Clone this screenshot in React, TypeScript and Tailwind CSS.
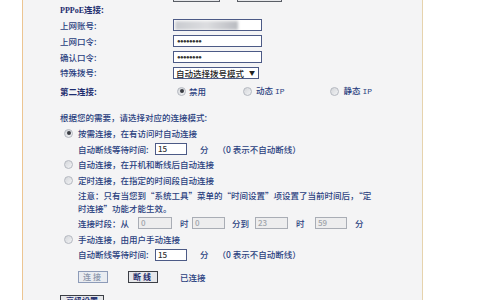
import React from "react";

// PPPoE WAN settings panel (router admin page, scrolled mid-form)

const font = "font-['Noto_Sans_CJK_SC','Noto_Sans',sans-serif]";

function Radio({ checked = false }: { checked?: boolean }) {
  return (
    <span className="w-[9px] h-[9px] rounded-full border border-[#b4b8c0] bg-gradient-to-br from-[#d4d6da] to-[#f2f3f5] flex items-center justify-center flex-shrink-0">
      {checked && <span className="w-[4px] h-[4px] rounded-full bg-[#3a3d44]" />}
    </span>
  );
}

function TextBox({ value, w, disabled = false }: { value: string; w: string; disabled?: boolean }) {
  return (
    <span
      className={
        disabled
          ? `${w} h-[12px] border border-[#a9adb5] bg-[#ededee] text-[#a0a4aa] text-[8px] leading-[10px] pl-[2px] flex-shrink-0`
          : `${w} h-[12px] border border-[#4c5a86] bg-white text-[#333] text-[8px] leading-[10px] pl-[2px] flex-shrink-0`
      }
    >
      {value}
    </span>
  );
}

function Password() {
  return (
    <span className="w-[89px] h-[12px] border border-[#4c5a86] bg-white text-[#333] pl-[3px] flex items-center flex-shrink-0">
      <span className="font-['Liberation_Sans',sans-serif] text-[6px] leading-none tracking-[-0.6px]">●●●●●●●●</span>
    </span>
  );
}

function Label({ children }: { children: React.ReactNode }) {
  return <span className="w-[113px] flex-shrink-0">{children}</span>;
}

export default function App() {
  return (
    <div className={`w-[480px] h-[300px] overflow-hidden bg-white ${font} text-[8.5px] font-medium text-[#2a3f80]`}>
      <div className="ml-[22px] w-[401px] h-[320px] bg-[#f4f4f5] border-l border-r border-l-[#ecc592] border-r-[#e6d3ad] pl-[37px] flex flex-col">
        {/* top buttons, mostly scrolled off */}
        <div className="h-[11px] -mt-[9px] flex pl-[113px] gap-[17px]">
          <span className="w-[47px] h-[11px] border border-[#5a5e66] bg-[#e6e7ea]" />
          <span className="w-[45px] h-[11px] border border-[#5a5e66] bg-[#e6e7ea]" />
        </div>

        <div className="h-[15px] flex items-center font-bold text-[#1d2c6e]">
          <span>
            <span className="font-['Liberation_Serif',serif] text-[8px]">PPPoE</span>连接:
          </span>
        </div>

        <div className="h-[16px] flex items-center">
          <Label>上网账号:</Label>
          <span className="w-[89px] h-[12px] border border-[#4c5a86] bg-white relative overflow-hidden flex-shrink-0">
            <span className="absolute left-[1px] top-[1px] w-[63px] h-[9px] blur-[1.5px] bg-gradient-to-r from-[#c9cbd0] via-[#dcdde0] to-[#b9bbc0]" />
          </span>
        </div>
        <div className="h-[16px] flex items-center">
          <Label>上网口令:</Label>
          <Password />
        </div>
        <div className="h-[16px] flex items-center">
          <Label>确认口令:</Label>
          <Password />
        </div>
        <div className="h-[15px] flex items-center">
          <Label>特殊拨号:</Label>
          <span className="w-[86px] h-[12px] border border-[#4c5a86] bg-white text-[#222] leading-[10px] pl-[2px] flex items-center justify-between pr-[3px] flex-shrink-0">
            自动选择拨号模式<span className="text-[6px]">▼</span>
          </span>
        </div>

        <div className="h-[16px] mt-[3px] flex items-center">
          <Label>
            <span className="font-bold text-[#1d2c6e]">第二连接:</span>
          </Label>
          <span className="ml-[4px] flex items-center gap-[3px]">
            <Radio checked />
            <span>禁用</span>
          </span>
          <span className="ml-[37px] flex items-center gap-[4px]">
            <Radio />
            <span>
              动态 <span className="font-['Liberation_Mono',monospace] text-[8px]">IP</span>
            </span>
          </span>
          <span className="ml-[45px] flex items-center gap-[5px]">
            <Radio />
            <span>
              静态 <span className="font-['Liberation_Mono',monospace] text-[8px]">IP</span>
            </span>
          </span>
        </div>

        <div className="h-[16px] mt-[10px] flex items-center">根据您的需要，请选择对应的连接模式:</div>

        <div className="h-[16px] flex items-center gap-[5px] pl-[4px]">
          <Radio checked />
          按需连接，在有访问时自动连接
        </div>
        <div className="h-[16px] flex items-center pl-[18px]">
          <span className="w-[77px]">自动断线等待时间:</span>
          <TextBox w="w-[32px]" value="15" />
          <span className="ml-[13px]">分</span>
          <span className="ml-[9px]">（0 表示不自动断线）</span>
        </div>
        <div className="h-[15px] flex items-center gap-[5px] pl-[4px]">
          <Radio />
          自动连接，在开机和断线后自动连接
        </div>
        <div className="h-[16px] flex items-center gap-[5px] pl-[4px]">
          <Radio />
          定时连接，在指定的时间段自动连接
        </div>
        <div className="pl-[18px] mt-[1px] leading-[13px]">
          <div>注意：只有当您到“系统工具”菜单的“时间设置”项设置了当前时间后，“定</div>
          <div>时连接”功能才能生效。</div>
        </div>
        <div className="h-[16px] flex items-center pl-[18px]">
          <span className="w-[60px]">连接时段：从</span>
          <TextBox w="w-[34px]" value="0" disabled />
          <span className="ml-[8px] w-[12px]">时</span>
          <TextBox w="w-[33px]" value="0" disabled />
          <span className="ml-[7px] w-[23px]">分到</span>
          <TextBox w="w-[33px]" value="23" disabled />
          <span className="ml-[8px] w-[19px]">时</span>
          <TextBox w="w-[32px]" value="59" disabled />
          <span className="ml-[8px]">分</span>
        </div>
        <div className="h-[16px] flex items-center gap-[5px] pl-[4px]">
          <Radio />
          手动连接，由用户手动连接
        </div>
        <div className="h-[15px] flex items-center pl-[18px]">
          <span className="w-[77px]">自动断线等待时间:</span>
          <TextBox w="w-[32px]" value="15" />
          <span className="ml-[13px]">分</span>
          <span className="ml-[9px]">（0 表示不自动断线）</span>
        </div>

        <div className="h-[16px] mt-[7px] flex items-center pl-[18px]">
          <span className="w-[30px] h-[12px] border border-[#8d9bb8] bg-[#e9ecf1] text-[#8a95ab] text-[8px] flex items-center justify-center tracking-[2px]">
            连接
          </span>
          <span className="ml-[20px] w-[30px] h-[12px] border border-[#3c3f46] bg-[#e6e7ea] text-[#1d2c6e] font-bold text-[8px] flex items-center justify-center tracking-[2px]">
            断线
          </span>
          <span className="ml-[22px]">已连接</span>
        </div>

        <div className="mt-[10px] flex">
          <span className="w-[44px] h-[12px] border border-[#3c3f46] bg-[#e6e7ea] text-[#1d2c6e] font-bold text-[8px] flex items-center justify-center">
            高级设置
          </span>
        </div>
      </div>
    </div>
  );
}
